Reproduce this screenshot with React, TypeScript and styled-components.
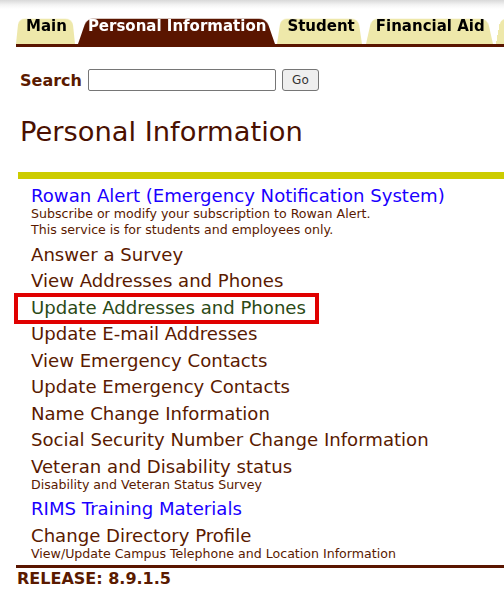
import React from 'react';
import styled, { createGlobalStyle } from 'styled-components';

const GlobalStyle = createGlobalStyle`
  html, body {
    margin: 0;
    padding: 0;
    background: #fff;
    overflow: hidden;
  }
  body {
    font-family: 'DejaVu Sans', Verdana, sans-serif;
    color: #5a1a00;
  }
`;

type Tab = { label: string; active?: boolean };

const tabs: Tab[] = [
  { label: 'Main' },
  { label: 'Personal Information', active: true },
  { label: 'Student' },
  { label: 'Financial Aid' },
  { label: 'Employee' },
];

type Entry = {
  title: string;
  notes?: string[];
  tone?: 'blue' | 'visited';
  highlighted?: boolean;
};

const entries: Entry[] = [
  {
    title: 'Rowan Alert (Emergency Notification System)',
    tone: 'blue',
    notes: [
      'Subscribe or modify your subscription to Rowan Alert.',
      'This service is for students and employees only.',
    ],
  },
  { title: 'Answer a Survey' },
  { title: 'View Addresses and Phones' },
  { title: 'Update Addresses and Phones', tone: 'visited', highlighted: true },
  { title: 'Update E-mail Addresses' },
  { title: 'View Emergency Contacts' },
  { title: 'Update Emergency Contacts' },
  { title: 'Name Change Information' },
  { title: 'Social Security Number Change Information' },
  { title: 'Veteran and Disability status', notes: ['Disability and Veteran Status Survey'] },
  { title: 'RIMS Training Materials', tone: 'blue' },
  {
    title: 'Change Directory Profile',
    notes: ['View/Update Campus Telephone and Location Information'],
  },
];

const App = () => {
  return (
    <>
      <GlobalStyle />
      <Page>
        <TopShade />
        <TabBar>
          {tabs.map((tab) => (
            <TabItem key={tab.label} $active={tab.active}>
              {tab.label}
            </TabItem>
          ))}
        </TabBar>

        <SearchRow>
          <SearchLabel htmlFor='search'>Search</SearchLabel>
          <SearchInput id='search' type='text' />
          <GoButton type='button'>Go</GoButton>
        </SearchRow>

        <PageTitle>Personal Information</PageTitle>
        <TitleRule />

        <MenuList>
          {entries.map((entry) => (
            <MenuEntry key={entry.title} $highlighted={entry.highlighted}>
              <MenuLink href='#' $tone={entry.tone}>
                {entry.title}
              </MenuLink>
              {entry.notes?.map((note) => (
                <MenuNote key={note}>{note}</MenuNote>
              ))}
            </MenuEntry>
          ))}
        </MenuList>

        <Footer>RELEASE: 8.9.1.5</Footer>
      </Page>
    </>
  );
};

const Page = styled.div`
  width: 504px;
  height: 608px;
  overflow: hidden;
  position: relative;
`;

const TopShade = styled.div`
  height: 16px;
  background: linear-gradient(to bottom, #d9d9d9 0px, #f4f4f4 5px, #ffffff 9px);
`;

const TabBar = styled.div`
  display: flex;
  gap: 3px;
  margin-left: 16px;
  white-space: nowrap;
  border-bottom: 3px solid #5a1500;
`;

const TabItem = styled.div<{ $active?: boolean }>`
  position: relative;
  flex: none;
  z-index: 0;
  height: 28px;
  padding: 0 8px 0 10px;
  line-height: 20px;
  font-size: 15px;
  font-weight: bold;
  color: ${(p) => (p.$active ? '#ffffff' : '#000000')};

  &::before {
    content: '';
    position: absolute;
    inset: 0;
    z-index: -1;
    background: ${(p) => (p.$active ? '#5a1500' : '#eee8aa')};
    border-radius: 7px 8px 0 0;
    transform: perspective(30px) rotateX(6deg);
    transform-origin: bottom;
  }
`;

const SearchRow = styled.div`
  display: flex;
  align-items: center;
  margin: 22px 0 0 20px;
  height: 22px;
`;

const SearchLabel = styled.label`
  font-size: 16px;
  font-weight: bold;
  color: #5a1a00;
  margin-right: 6px;
`;

const SearchInput = styled.input`
  box-sizing: border-box;
  width: 188px;
  height: 22px;
  border: 1px solid #767676;
  border-radius: 2px;
  padding: 0 4px;
  margin: 0;
`;

const GoButton = styled.button`
  box-sizing: border-box;
  width: 37px;
  height: 22px;
  margin-left: 6px;
  border: 1px solid #767676;
  border-radius: 3px;
  background: #efefef;
  font-family: 'DejaVu Sans', Verdana, sans-serif;
  font-size: 12px;
  color: #333;
  padding: 0;
`;

const PageTitle = styled.h1`
  margin: 24px 0 0 20px;
  font-size: 27.3px;
  font-weight: normal;
  line-height: 34px;
  color: #4a1000;
`;

const TitleRule = styled.div`
  margin: 23px 0 0 18px;
  height: 7px;
  background: #cccc00;
`;

const MenuList = styled.div`
  display: flex;
  flex-direction: column;
  gap: 6.5px;
  margin: 7px 0 0 31px;
`;

const MenuEntry = styled.div<{ $highlighted?: boolean }>`
  position: relative;

  ${(p) =>
    p.$highlighted &&
    `
    &::after {
      content: '';
      position: absolute;
      left: -17px;
      top: -5px;
      width: 305px;
      height: 31px;
      box-sizing: border-box;
      border: 4px solid #e00000;
      pointer-events: none;
    }
  `}
`;

const linkColors = {
  blue: '#1a00ff',
  visited: '#2b4a16',
  plain: '#5a1a00',
};

const MenuLink = styled.a<{ $tone?: 'blue' | 'visited' }>`
  display: block;
  font-size: 18.1px;
  line-height: 20px;
  text-decoration: none;
  white-space: nowrap;
  color: ${(p) => linkColors[p.$tone ?? 'plain']};
`;

const MenuNote = styled.div`
  font-size: 12.6px;
  line-height: 16px;
  white-space: nowrap;
  color: #5a1a00;
`;

const Footer = styled.div`
  margin: 3px 0 0 16px;
  padding: 2px 0 0 1px;
  border-top: 3px solid #5a1500;
  font-size: 16px;
  font-weight: bold;
  line-height: 18px;
  color: #5a1a00;
`;

export default App;
